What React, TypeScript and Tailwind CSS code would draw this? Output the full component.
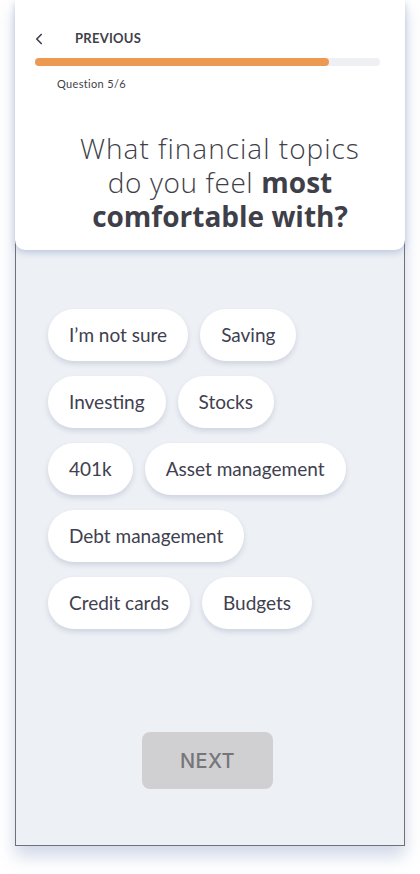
import React from 'react';
import { ChevronLeft } from 'lucide-react';

const topics = [
  ["I’m not sure", "Saving"],
  ["Investing", "Stocks"],
  ["401k", "Asset management"],
  ["Debt management"],
  ["Credit cards", "Budgets"],
];

const App: React.FC = () => {
  return (
    <div className="w-[420px] h-[874px] bg-white px-[15px] overflow-hidden">
      <div className="w-[390px] h-[846px] bg-[#edf0f5] border-x border-b border-[#6e7178] shadow-[0_10px_16px_rgba(120,140,185,0.35)] flex flex-col">
        <div className="relative z-10 -mx-px bg-white rounded-b-[10px] shadow-[0_3px_6px_rgba(110,130,180,0.35)] h-[250px] shrink-0 px-[20px] pt-[31px]">
          <div className="flex items-center h-[16px] text-[#3f3f4a]">
            <ChevronLeft size={18} strokeWidth={2.2} className="-ml-[5px]" />
            <span className="ml-[27px] text-[13px] font-bold tracking-[0.02em] font-['Lato',sans-serif]">PREVIOUS</span>
          </div>
          <div className="mt-[11px] h-[8px] rounded-full bg-[#eff0f4] w-[345px]">
            <div className="h-full w-[294px] rounded-full bg-[#ec9a52]" />
          </div>
          <div className="mt-[10px] ml-[22px] text-[11px] text-[#3f3f4a] font-['Lato',sans-serif] tracking-[0.03em]">Question 5/6</div>
          <h1 className="mt-[38px] pl-[20px] flex flex-col items-center text-[28px] leading-[34px] text-[#3f3f4a] font-['Open_Sans',sans-serif] font-light">
            <div className="h-[34px] flex tracking-[1px] whitespace-nowrap">What financial topics</div>
            <div className="h-[34px] flex gap-[8px] whitespace-nowrap">
              <span className="tracking-[0.6px]">do you feel</span>
              <span className="font-bold">most</span>
            </div>
            <div className="h-[34px] flex font-bold whitespace-nowrap">comfortable with?</div>
          </h1>
        </div>

        <div className="flex flex-col gap-[15px] pt-[59px] pl-[32px]">
          {topics.map((row, i) => (
            <div key={i} className="flex gap-[12px]">
              {row.map((t) => (
                <div
                  key={t}
                  className="h-[52px] px-[21px] flex items-center rounded-full bg-white shadow-[0_3px_5px_rgba(120,130,160,0.25)] text-[19px] text-[#3f4050] font-['Lato',sans-serif]"
                >
                  {t}
                </div>
              ))}
            </div>
          ))}
        </div>

        <div className="flex justify-center mt-[103px] pr-[5px]">
          <div className="w-[131px] h-[57px] rounded-[8px] bg-[#d0d0d2] flex items-center justify-center text-[20px] font-medium tracking-[0.02em] text-[#76767a] font-['Inter',sans-serif]">
            NEXT
          </div>
        </div>
      </div>
    </div>
  );
};

export default App;
